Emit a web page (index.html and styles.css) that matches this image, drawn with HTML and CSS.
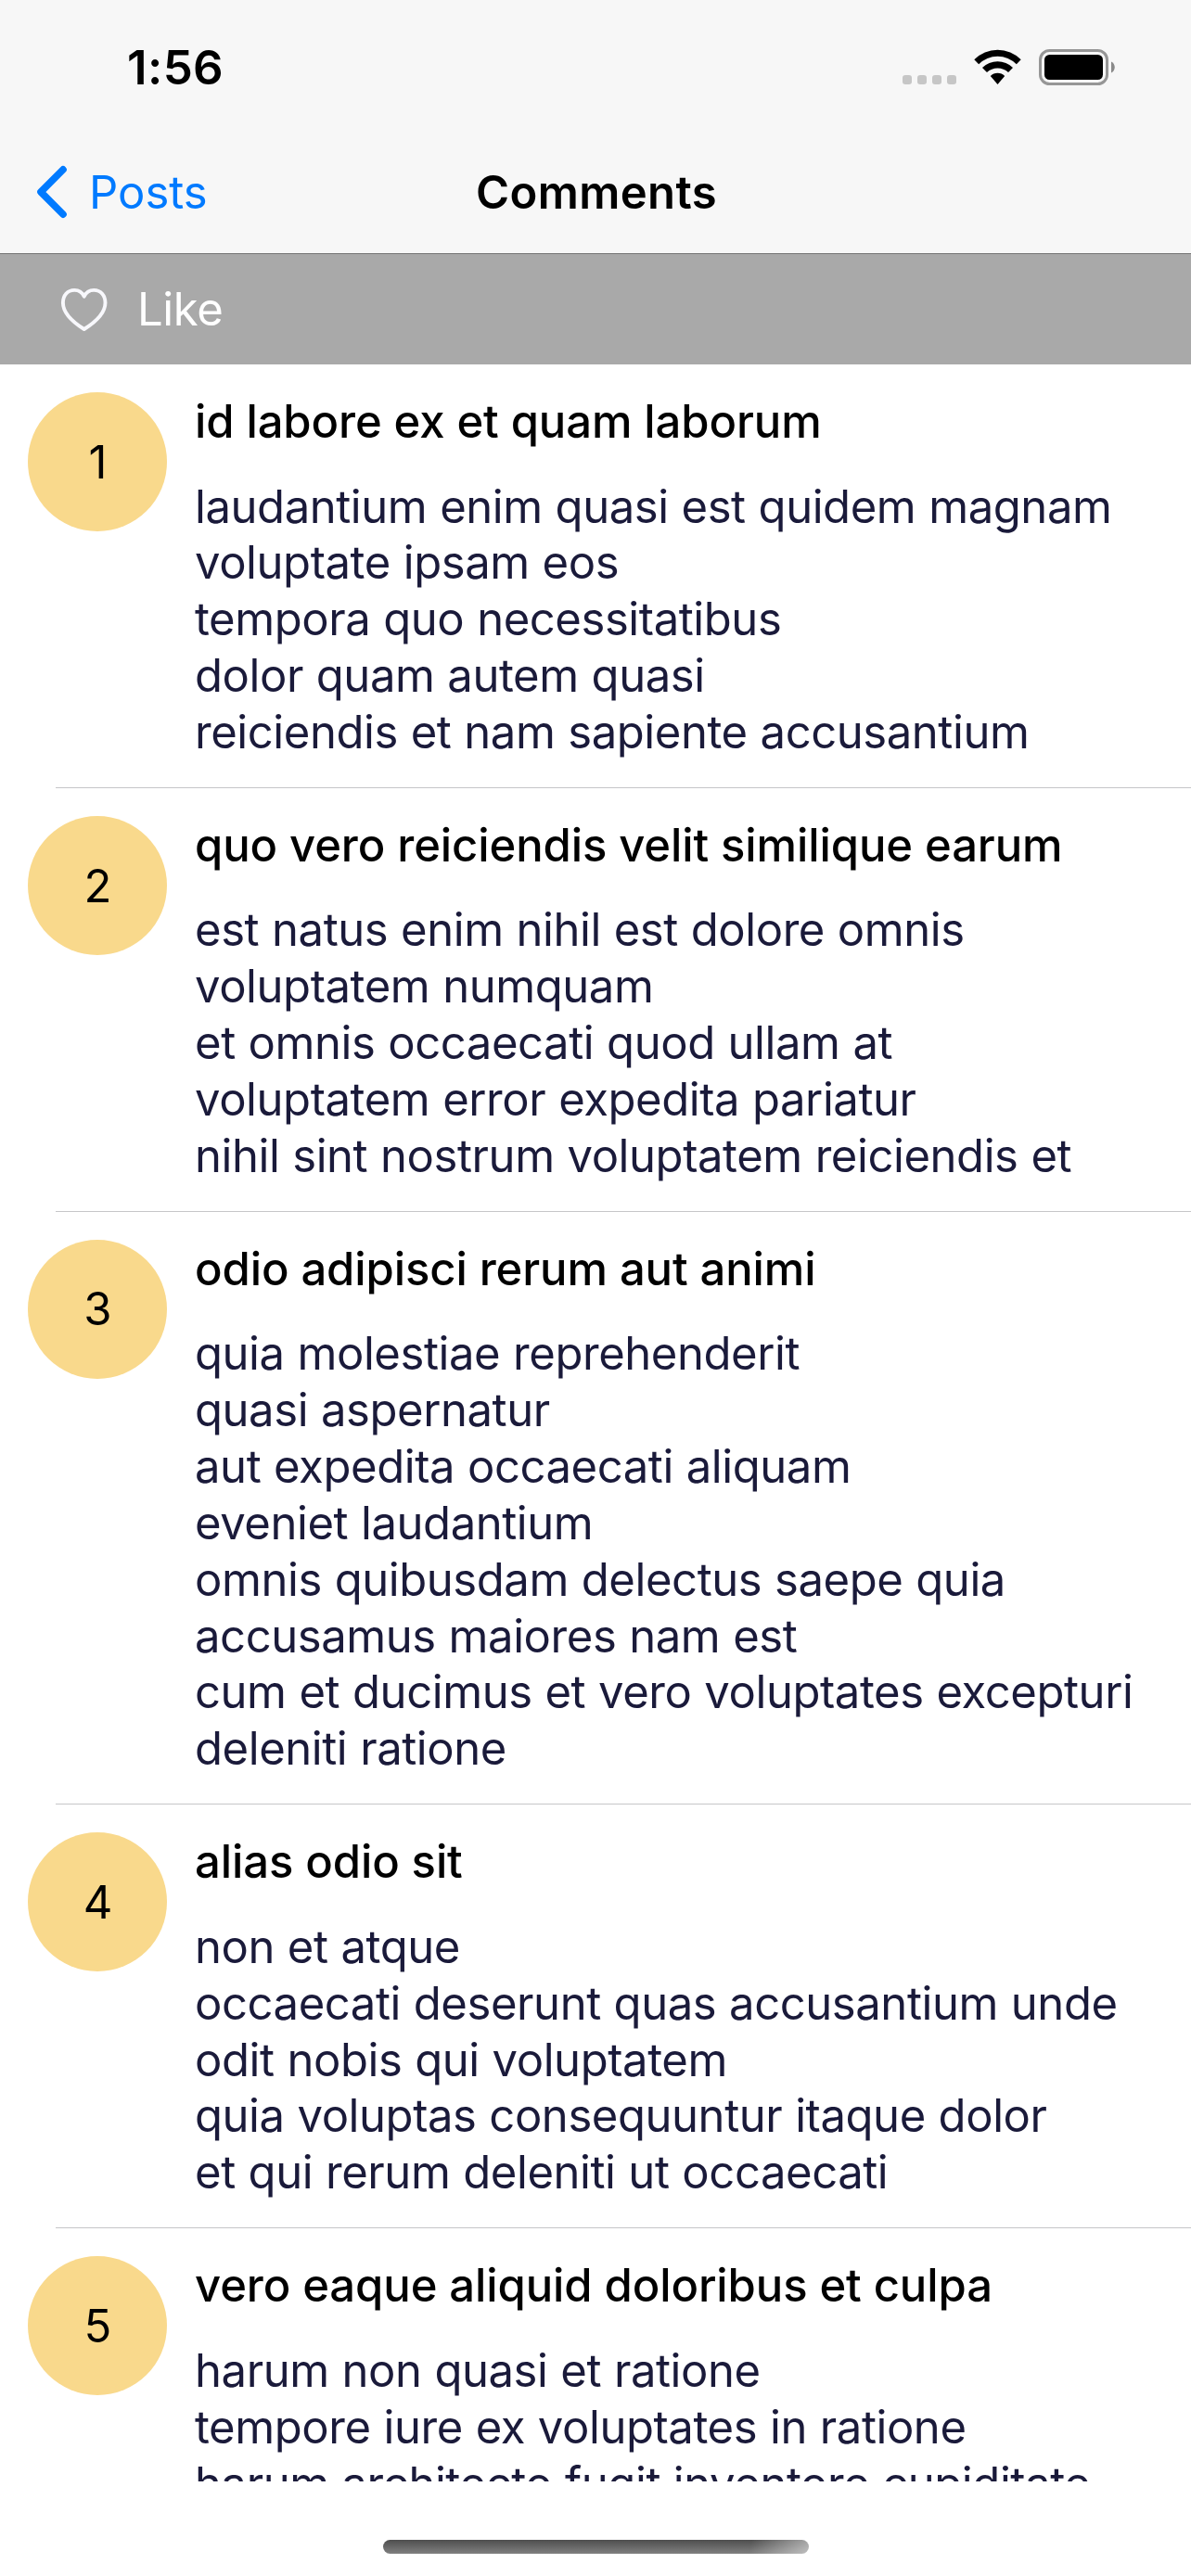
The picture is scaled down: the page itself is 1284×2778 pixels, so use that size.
FILE: index.html
```
<!DOCTYPE html>
<html lang="en">
<head>
<meta charset="utf-8">
<title>Comments</title>
<link rel="stylesheet" href="styles.css">
</head>
<body>
<div class="screen">
  <header class="header">
    <div class="status-bar">
      <span class="time">1:56</span>
      <svg class="status-icons" width="232" height="44" viewBox="0 0 232 44" aria-hidden="true">
        <g fill="#c6c6c6">
          <rect x="3" y="31" width="10" height="10" rx="3"/>
          <rect x="19" y="31" width="10" height="10" rx="3"/>
          <rect x="35" y="31" width="10" height="10" rx="3"/>
          <rect x="51" y="31" width="10" height="10" rx="3"/>
        </g>
        <g fill="#000">
          <path d="M80.3 14.2A35.5 35.5 0 0 1 130.7 14.2L125.8 19.2A28.5 28.5 0 0 0 85.2 19.2Z"/>
          <path d="M89 23.1A23.6 23.6 0 0 1 122 23.1L117 28.1A16.6 16.6 0 0 0 94 28.1Z"/>
          <path d="M97.8 32A11 11 0 0 1 113.2 32L105.5 41Z"/>
        </g>
        <rect x="151.5" y="4.500" width="72" height="36" rx="10" fill="none" stroke="#969696" stroke-width="3"/>
        <rect x="156" y="9" width="63" height="27" rx="5.500"/>
        <path d="M228 16.500C233 18.500 233 26.500 228 28.500Z" fill="#8a8a8a"/>
      </svg>
    </div>
    <nav class="nav-bar">
      <a class="back">
        <svg width="36" height="60" viewBox="0 0 36 60" aria-hidden="true"><path d="M32 5.900L8 30L32 54.100" fill="none" stroke="#007aff" stroke-width="7.600" stroke-linecap="round" stroke-linejoin="round"/></svg>
        <span class="back-label">Posts</span>
      </a>
      <h1 class="nav-title">Comments</h1>
    </nav>
  </header>
  <div class="like-bar">
    <svg width="54" height="50" viewBox="0 0 54 50" aria-hidden="true"><path d="M27.700 10.800C25.500 6 21.500 3.900 17.200 3.900C9.700 3.900 4.900 9.700 4.900 17.500C4.900 28.500 15.700 38.500 27.700 46C39.700 38.500 50.500 28.500 50.500 17.500C50.500 9.700 45.700 3.900 38.200 3.900C33.900 3.900 29.900 6 27.700 10.800Z" fill="none" stroke="#f8f8fc" stroke-width="3.900" stroke-linejoin="round"/></svg>
    <span class="like-label">Like</span>
  </div>
  <main class="list">
    <article class="comment">
      <div class="avatar">1</div>
      <div class="content">
        <h2 class="title">id labore ex et quam laborum</h2>
        <p class="body">laudantium enim quasi est quidem magnam<br>voluptate ipsam eos<br>tempora quo necessitatibus<br>dolor quam autem quasi<br>reiciendis et nam sapiente accusantium</p>
      </div>
    </article>
    <article class="comment">
      <div class="avatar">2</div>
      <div class="content">
        <h2 class="title">quo vero reiciendis velit similique earum</h2>
        <p class="body">est natus enim nihil est dolore omnis<br>voluptatem numquam<br>et omnis occaecati quod ullam at<br>voluptatem error expedita pariatur<br>nihil sint nostrum voluptatem reiciendis et</p>
      </div>
    </article>
    <article class="comment">
      <div class="avatar">3</div>
      <div class="content">
        <h2 class="title">odio adipisci rerum aut animi</h2>
        <p class="body">quia molestiae reprehenderit<br>quasi aspernatur<br>aut expedita occaecati aliquam<br>eveniet laudantium<br>omnis quibusdam delectus saepe quia<br>accusamus maiores nam est<br>cum et ducimus et vero voluptates excepturi<br>deleniti ratione</p>
      </div>
    </article>
    <article class="comment">
      <div class="avatar">4</div>
      <div class="content">
        <h2 class="title">alias odio sit</h2>
        <p class="body">non et atque<br>occaecati deserunt quas accusantium unde<br>odit nobis qui voluptatem<br>quia voluptas consequuntur itaque dolor<br>et qui rerum deleniti ut occaecati</p>
      </div>
    </article>
    <article class="comment">
      <div class="avatar">5</div>
      <div class="content">
        <h2 class="title">vero eaque aliquid doloribus et culpa</h2>
        <p class="body">harum non quasi et ratione<br>tempore iure ex voluptates in ratione<br>harum architecto fugit inventore cupiditate</p>
      </div>
    </article>
  </main>
  <footer class="home-area"><div class="home-indicator"></div></footer>
</div>
</body>
</html>
```
FILE: styles.css
```
* { box-sizing: border-box; }

body {
  margin: 0;
  background: #fff;
  color: #000;
  font-family: Inter, "Liberation Sans", sans-serif;
  font-size: 49px;
  line-height: 60.85px;
}

h1, h2, p { margin: 0; font-size: inherit; }

.screen {
  display: flex;
  flex-direction: column;
  width: 1284px;
  height: 2778px;
  overflow: hidden;
}

.header {
  flex: none;
  height: 274px;
  background: #f7f7f7;
  border-bottom: 1px solid #757575;
}

.status-bar {
  display: flex;
  justify-content: space-between;
  align-items: flex-start;
  height: 141px;
  padding: 42px 82px 0 137px;
}

.time {
  padding-top: 1px;
  font-size: 51px;
  font-weight: 600;
  letter-spacing: 0.4px;
}

.status-icons { margin-top: 8px; }

.nav-bar {
  display: grid;
  grid-template-columns: 1fr auto 1fr;
  align-items: center;
  height: 132px;
  padding: 0 35px 0 36px;
}

.back {
  display: flex;
  align-items: center;
  gap: 24px;
  color: #007aff;
}

.back-label { padding-top: 2px; }

.nav-title {
  padding: 2px 0 0 1px;
  font-weight: 600;
  letter-spacing: 0.4px;
}

.like-bar {
  flex: none;
  display: flex;
  align-items: center;
  gap: 31px;
  height: 119px;
  padding-left: 63px;
  background: #a9a9a9;
  color: #fff;
  letter-spacing: -0.4px;
}

.like-label { padding-top: 2px; }

.list {
  flex: none;
  height: 2283px;
  overflow: hidden;
}

.comment {
  display: flex;
  align-items: flex-start;
  gap: 30px;
  padding: 30px 0 29.2px 30px;
  background: linear-gradient(#c6c6c8, #c6c6c8) 60px 100% / 100% 1px no-repeat;
}

.avatar {
  flex: none;
  display: flex;
  align-items: center;
  justify-content: center;
  width: 150px;
  height: 150px;
  padding: 2px 0 0 1px;
  border-radius: 50%;
  background: #f9d98c;
}

.content { padding-top: 1.9px; }

.title {
  margin-bottom: 30.8px;
  font-weight: 500;
  letter-spacing: -0.1px;
}

.body {
  color: #1a1a3a;
  letter-spacing: -0.43px;
  word-spacing: 0.5px;
  white-space: nowrap;
}

.home-area {
  flex: 1;
  display: flex;
  justify-content: center;
  padding-top: 63px;
}

.home-indicator {
  width: 459px;
  height: 15px;
  border-radius: 7.5px;
  background:
    linear-gradient(100deg, transparent 86%, rgba(255, 255, 255, 0.5) 100%),
    linear-gradient(#4e4e4e, #808080);
}
```
